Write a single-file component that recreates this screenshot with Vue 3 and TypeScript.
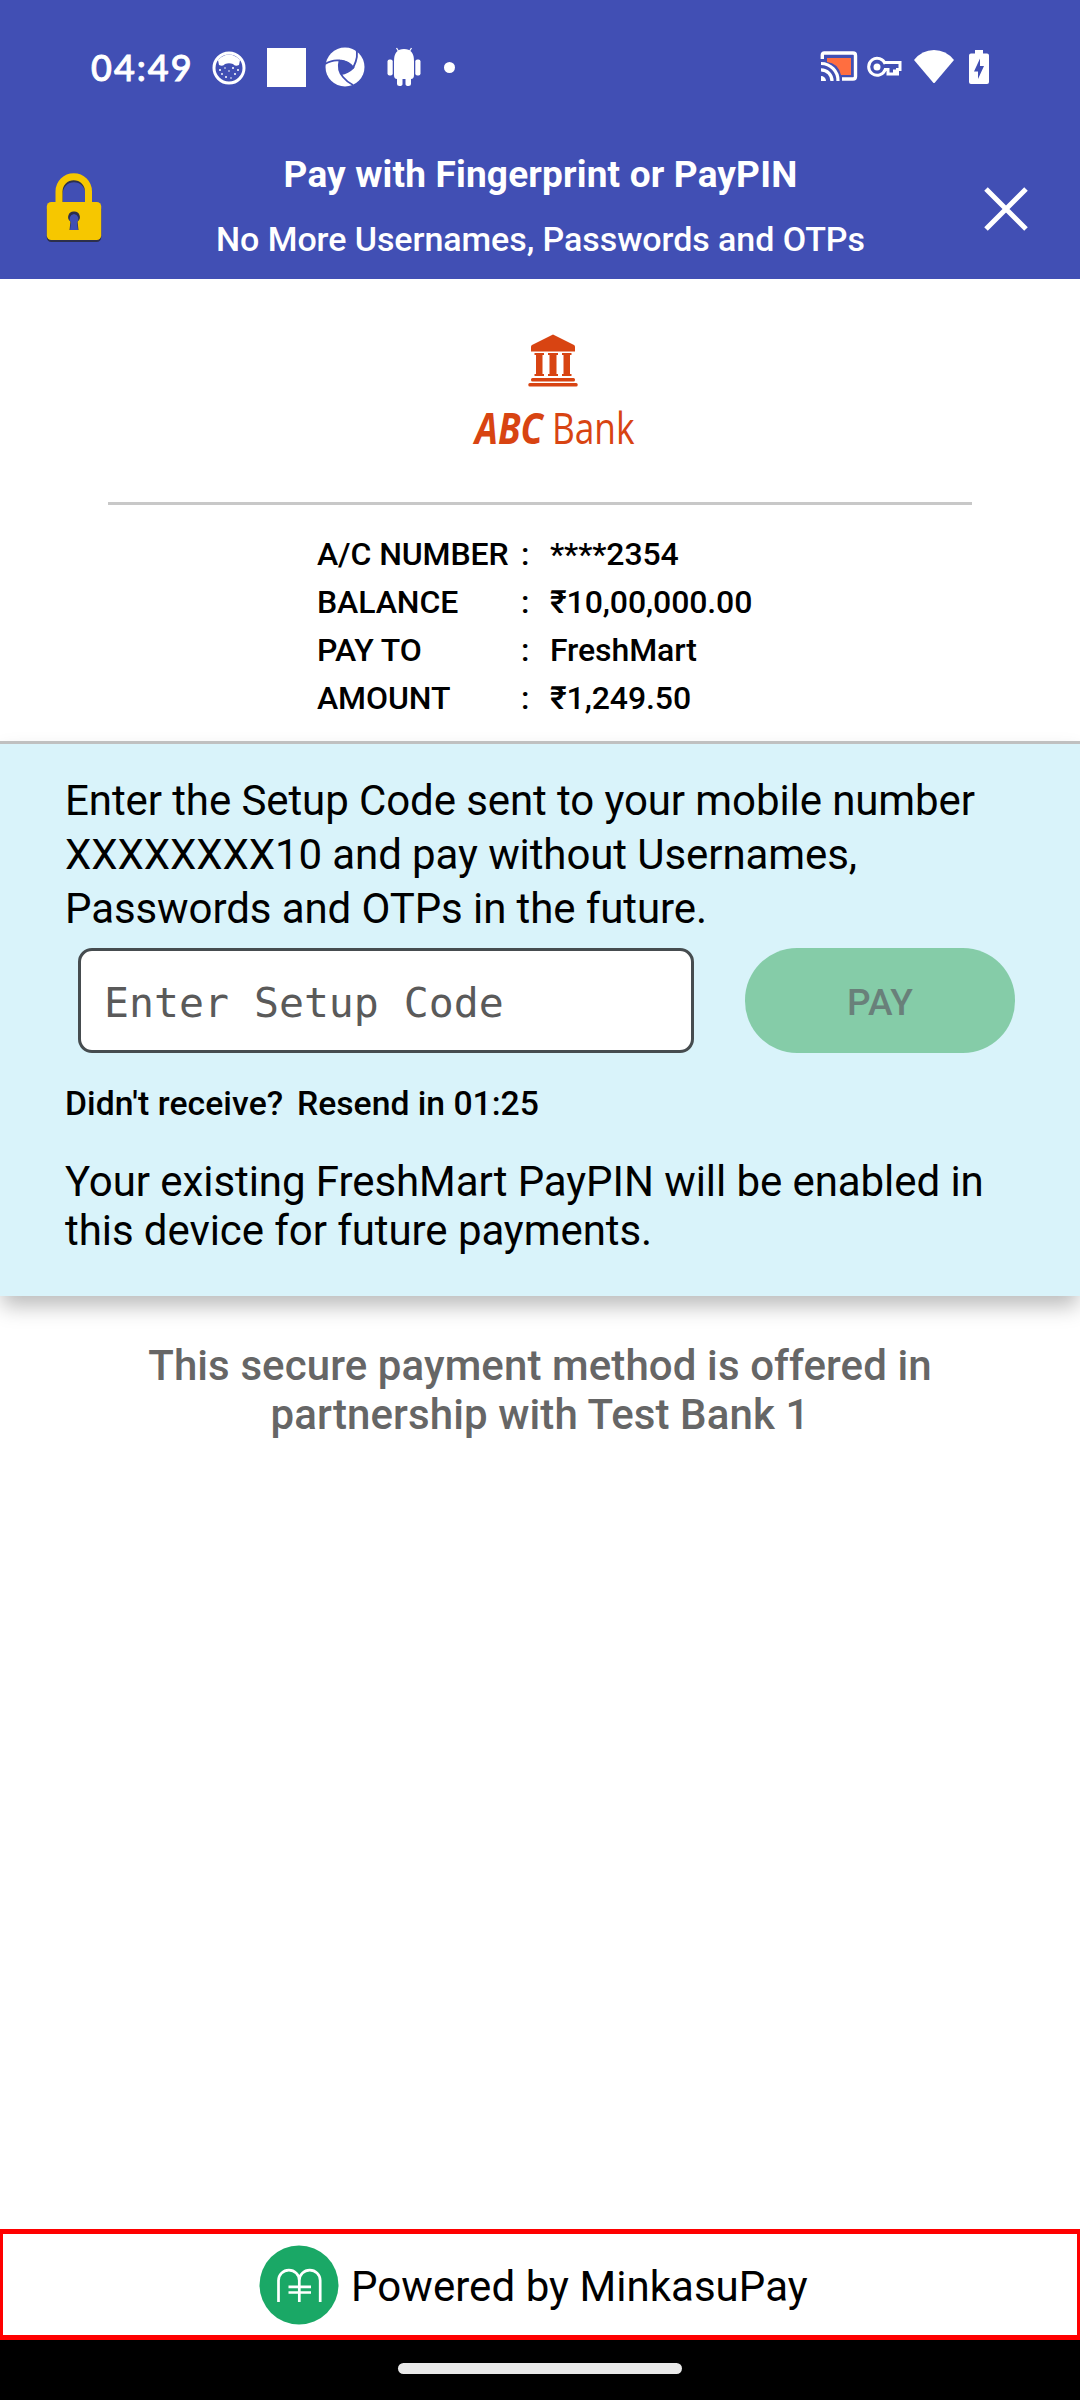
<script setup lang="ts">
interface Detail {
  label: string
  value: string
}

const details: Detail[] = [
  { label: 'A/C NUMBER', value: '****2354' },
  { label: 'BALANCE', value: '₹10,00,000.00' },
  { label: 'PAY TO', value: 'FreshMart' },
  { label: 'AMOUNT', value: '₹1,249.50' },
]
</script>

<template>
  <div class="screen">
    <div class="status">
      <span class="time">04:49</span>
      <svg class="cat" width="34" height="34" viewBox="0 0 34 34">
        <circle cx="17" cy="17" r="15" fill="none" stroke="#fff" stroke-width="3" />
        <path d="M6 9 Q17 -2 28 9 L27 14 Q23 16 21 13 Q17 11.500 13 13 Q11 16 7 14 Z" fill="#fff" />
        <g fill="#fff">
          <circle cx="8" cy="19" r="1" /><circle cx="13" cy="17" r=".8" /><circle cx="21" cy="17" r="1" />
          <circle cx="26" cy="19" r="1" /><circle cx="10" cy="23" r=".9" /><circle cx="17" cy="20" r=".8" />
          <circle cx="23" cy="23" r="1" /><circle cx="14" cy="26" r="1" /><circle cx="19" cy="27" r=".8" />
        </g>
      </svg>
      <span class="square"></span>
      <svg class="aperture" width="40" height="40" viewBox="0 0 40 40">
        <circle cx="20" cy="20" r="19.500" fill="#fff" />
        <path d="M14 14.500 Q21 11 28.500 20.500 Q21 26 15.500 27 Q13 20 14 14.500Z" fill="#414fb4" />
        <g fill="none" stroke="#414fb4" stroke-width="1.800">
          <path d="M0 17 Q7 12.500 15 13.500 Q23 14 29 21" />
          <path d="M31 1 Q34 9 28.500 20" />
          <path d="M14.500 14 Q12 23 18 30 Q22 35 28 38" />
          <path d="M28.500 20.500 Q23 26 16 27" />
        </g>
      </svg>
      <svg class="robot" width="34" height="40" viewBox="0 0 34 40" fill="#fff">
        <path d="M7 14 Q7 2 17 2 Q27 2 27 14 V28 Q27 32 24 32 V37 Q24 39 21.500 39 Q18.500 39 18.500 37 V32 H15.500 V37 Q15.500 39 12.500 39 Q10 39 10 37 V32 Q7 32 7 28Z" />
        <rect x=".5" y="12.500" width="5.200" height="16" rx="2" />
        <rect x="28.300" y="12.500" width="5.200" height="16" rx="2" />
        <path d="M9.500 1 L12 5 M24.500 1 L22 5" stroke="#fff" stroke-width="1.300" />
      </svg>
      <span class="dot"></span>
      <span class="grow"></span>
      <svg class="cast" width="38" height="32" viewBox="0 0 38 32">
        <path d="M7 7 H31 V24 H21 Q18 12 7 11Z" fill="#ff6e40" />
        <path d="M2.300 8 V4 Q2.300 2 4.300 2 H33 Q35.500 2 35.500 4.500 V25.500 Q35.500 28 33 28 H22" fill="none" stroke="#fff" stroke-width="3.400" />
        <path d="M1 12.500 A17 17 0 0 1 18 30 M1 18.800 A11 11 0 0 1 12 30" fill="none" stroke="#fff" stroke-width="3.200" />
        <path d="M1 25 A5 5 0 0 1 6 30 H1Z" fill="#fff" />
      </svg>
      <svg class="key" width="35" height="22" viewBox="0 0 35 22">
        <path d="M18.200 8 A8.500 8.500 0 1 0 18.200 13.500 H21 V18 H27.500 V13.500 M17.500 6.500 H33 V13.500 H30.500 V18 H22" fill="none" stroke="#fff" stroke-width="3" />
        <circle cx="10" cy="11" r="3.500" fill="#fff" />
      </svg>
      <svg class="wifi" width="40" height="33" viewBox="0 0 40 33">
        <path d="M0 10 Q8 0 20 0 Q32 0 40 10 L20.500 33 H19.500Z" fill="#fff" />
      </svg>
      <svg class="battery" width="20" height="34" viewBox="0 0 20 34">
        <path d="M6 0 H14 V3.500 H18 Q20 3.500 20 5.500 V32 Q20 34 18 34 H2 Q0 34 0 32 V5.500 Q0 3.500 2 3.500 H6Z" fill="#fff" />
        <path d="M11 8.500 L5 21.500 H9 V29 L15 16 H11Z" fill="#414fb4" />
      </svg>
    </div>

    <header class="header">
      <svg class="lock" width="56" height="72" viewBox="0 0 56 72">
        <path d="M13.500 30 V20.500 A14.500 14.500 0 0 1 42.500 20.500 V30" fill="none" stroke="#2c2f4c" stroke-width="6.500" />
        <path d="M13 30 V18.500 A14.500 14.500 0 0 1 42.500 18.500 V30" fill="none" stroke="#f6c700" stroke-width="7" />
        <rect x=".8" y="32" width="54.400" height="37" rx="4.500" fill="#2c2f4c" />
        <rect x=".8" y="29" width="54.400" height="38" rx="4.500" fill="#f6c700" />
        <path d="M28 38.500 A5.500 5.500 0 0 1 31.500 48.500 L32.500 57 H23.500 L24.500 48.500 A5.500 5.500 0 0 1 28 38.500Z" fill="#2c2f4c" />
        <path d="M28 41 A5 5 0 0 1 31 49.500 L32 57 H24 L25 49.500 A5 5 0 0 1 28 41Z" fill="#414fb4" />
      </svg>
      <div class="titles">
        <div class="title">Pay with Fingerprint or PayPIN</div>
        <div class="subtitle">No More Usernames, Passwords and OTPs</div>
      </div>
      <svg class="close" width="44" height="44" viewBox="0 0 44 44">
        <path d="M2 2 L42 42 M42 2 L2 42" stroke="#fff" stroke-width="5" />
      </svg>
    </header>

    <section class="account">
      <svg class="bank-icon" width="50" height="54" viewBox="0 0 50 54" fill="#d84412">
        <path d="M25 .5 L46 11 Q47 11.500 47 13 V17.500 H3 V13 Q3 11.500 4 11Z" />
        <path d="M6.500 19 H16 V21 H14.500 V40 H16 V42 H6.500 V40 H8 V21 H6.500Z M20 19 H30 V21 H28.500 V40 H30 V42 H20 V40 H21.500 V21 H20Z M34 19 H43.500 V21 H42 V40 H43.500 V42 H34 V40 H35.500 V21 H34Z" />
        <rect x="3" y="44" width="44" height="3.500" rx="1.500" />
        <rect x=".3" y="49" width="49.400" height="3.500" rx="1.500" />
      </svg>
      <div class="bank-name"><b>ABC</b><span>Bank</span></div>
      <div class="rule"></div>
      <div class="details">
        <div v-for="d in details" :key="d.label" class="row">
          <span class="label">{{ d.label }}</span>
          <span class="colon">:</span>
          <span class="value">{{ d.value }}</span>
        </div>
      </div>
    </section>

    <section class="panel">
      <p class="intro">Enter the Setup Code sent to your mobile number<br />XXXXXXXX10 and pay without Usernames,<br />Passwords and OTPs in the future.</p>
      <div class="form">
        <input class="code" type="text" placeholder="Enter Setup Code" />
        <button class="pay" type="button">PAY</button>
      </div>
      <div class="resend"><span class="ask">Didn't receive?</span><span class="timer">Resend in 01:25</span></div>
      <p class="note">Your existing FreshMart PayPIN will be enabled in<br />this device for future payments.</p>
    </section>

    <p class="partner">This secure payment method is offered in<br />partnership with Test Bank 1</p>

    <footer class="powered">
      <svg width="80" height="80" viewBox="0 0 80 80">
        <circle cx="40" cy="40" r="39.500" fill="#1aa866" />
        <path d="M19.500 57 V35.500 A10.400 10.400 0 0 1 40.300 35.500 V57 M40.300 35.500 A10.400 10.400 0 0 1 61.200 35.500 V57 M29.500 41.800 H52 M29.500 47.500 H52" fill="none" stroke="#fff" stroke-width="2.700" />
      </svg>
      <span class="powered-text">Powered by MinkasuPay</span>
    </footer>
    <div class="nav"><span class="pill"></span></div>
  </div>
</template>

<style>
body {
  margin: 0;
  background: #fff;
}
</style>

<style scoped>
.screen {
  width: 1080px;
  height: 2400px;
  display: flex;
  flex-direction: column;
  background: #fff;
  color: #000;
  font-family: Roboto, sans-serif;
  overflow: hidden;
}
.screen * {
  box-sizing: border-box;
}
.screen svg {
  display: block;
  flex: none;
}
p {
  margin: 0;
}
.status {
  height: 134px;
  flex: none;
  display: flex;
  align-items: center;
  background: #414fb4;
  padding: 0 91px 0 91px;
}
.time {
  width: 102px;
  font: 500 36px/40px Lato, sans-serif;
  letter-spacing: 2px;
  -webkit-text-stroke: 0.9px #fff;
  color: #fff;
  white-space: nowrap;
}
.cat {
  margin-left: 19px;
  margin-top: 2px;
}
.square {
  width: 39px;
  height: 39px;
  margin-left: 21px;
  background: #fff;
}
.aperture {
  margin-left: 19px;
}
.robot {
  margin-left: 22px;
}
.dot {
  width: 11px;
  height: 11px;
  margin-left: 23px;
  margin-top: 1px;
  border-radius: 50%;
  background: #fff;
}
.grow {
  flex: 1;
}
.key {
  margin-left: 9px;
}
.wifi {
  margin-left: 12px;
  margin-top: -1px;
}
.battery {
  margin-left: 15px;
}
.header {
  height: 145px;
  flex: none;
  display: flex;
  align-items: flex-start;
  background: #414fb4;
  color: #fff;
  padding: 0 52px 0 46px;
}
.lock {
  margin-top: 39px;
}
.titles {
  flex: 1;
  margin-left: -5px;
  text-align: center;
  white-space: nowrap;
}
.title {
  margin-top: 20px;
  font-size: 37px;
  line-height: 42px;
  font-weight: 700;
  letter-spacing: 0.17px;
}
.subtitle {
  margin-top: 24px;
  font-size: 34px;
  line-height: 38px;
  font-weight: 500;
  letter-spacing: -0.07px;
}
.close {
  margin-top: 53px;
}
.account {
  flex: none;
  height: 462px;
  display: flex;
  flex-direction: column;
}
.bank-icon {
  margin: 55px 0 0 528px;
}
.bank-name {
  display: flex;
  margin: 11px 0 0 475px;
  height: 58px;
  font: 43px/58px 'Open Sans', sans-serif;
  color: #d84412;
}
.bank-name b {
  width: 77px;
  font-style: italic;
  transform: scaleX(0.85);
  transform-origin: 0 0;
}
.bank-name span {
  transform: scaleX(0.82);
  transform-origin: 0 0;
}
.rule {
  height: 3px;
  margin: 45px 108px 0 108px;
  background: #c8c8c8;
}
.details {
  margin: 25px 0 0 317px;
  font-size: 32px;
  line-height: 48px;
  font-weight: 500;
  letter-spacing: -0.1px;
}
.row {
  display: flex;
  white-space: nowrap;
}
.label {
  width: 204px;
}
.colon {
  width: 29px;
}
.panel {
  flex: none;
  height: 555px;
  border-top: 3px solid #c0c0c0;
  background: #d9f3fa;
  padding: 30px 65px 0;
  box-shadow: 0 12px 20px -2px rgba(0, 0, 0, 0.27);
  white-space: nowrap;
}
.intro {
  font-size: 42px;
  line-height: 54px;
  letter-spacing: -0.09px;
}
.form {
  display: flex;
  margin-top: 12px;
  padding-left: 13px;
}
.code {
  width: 616px;
  height: 105px;
  border: 3px solid #464c4f;
  border-radius: 14px;
  background: #fff;
  padding: 3px 23px 0;
  font: 41.500px 'DejaVu Sans Mono', monospace;
}
.code::placeholder {
  color: #5a5a5a;
  opacity: 1;
}
.pay {
  width: 270px;
  height: 105px;
  margin-left: 51px;
  padding: 3px 0 0;
  border: 0;
  border-radius: 52px;
  background: #85cca8;
  color: #69807a;
  font: 500 37px Roboto, sans-serif;
}
.resend {
  display: flex;
  margin-top: 31px;
  font-size: 33.700px;
  line-height: 40px;
  font-weight: 500;
}
.ask {
  width: 232px;
  letter-spacing: 0.1px;
}
.note {
  margin-top: 33px;
  font-size: 42px;
  line-height: 49px;
  letter-spacing: -0.07px;
}
.partner {
  flex: 1;
  margin-top: 45px;
  color: #666;
  text-align: center;
  font-size: 42px;
  line-height: 49px;
  font-weight: 500;
  letter-spacing: 0.1px;
  white-space: nowrap;
}
.powered {
  flex: none;
  height: 111px;
  display: flex;
  align-items: center;
  border: 5px solid #f00;
  border-width: 5px 3px;
  padding-left: 256px;
  font-size: 42px;
  letter-spacing: 0.05px;
}
.powered-text {
  margin: 4px 0 0 12px;
}
.nav {
  flex: none;
  height: 60px;
  background: #000;
  display: flex;
  justify-content: center;
  padding-top: 23px;
}
.pill {
  width: 284px;
  height: 11px;
  border-radius: 6px;
  background: #e9e9e9;
}
</style>
